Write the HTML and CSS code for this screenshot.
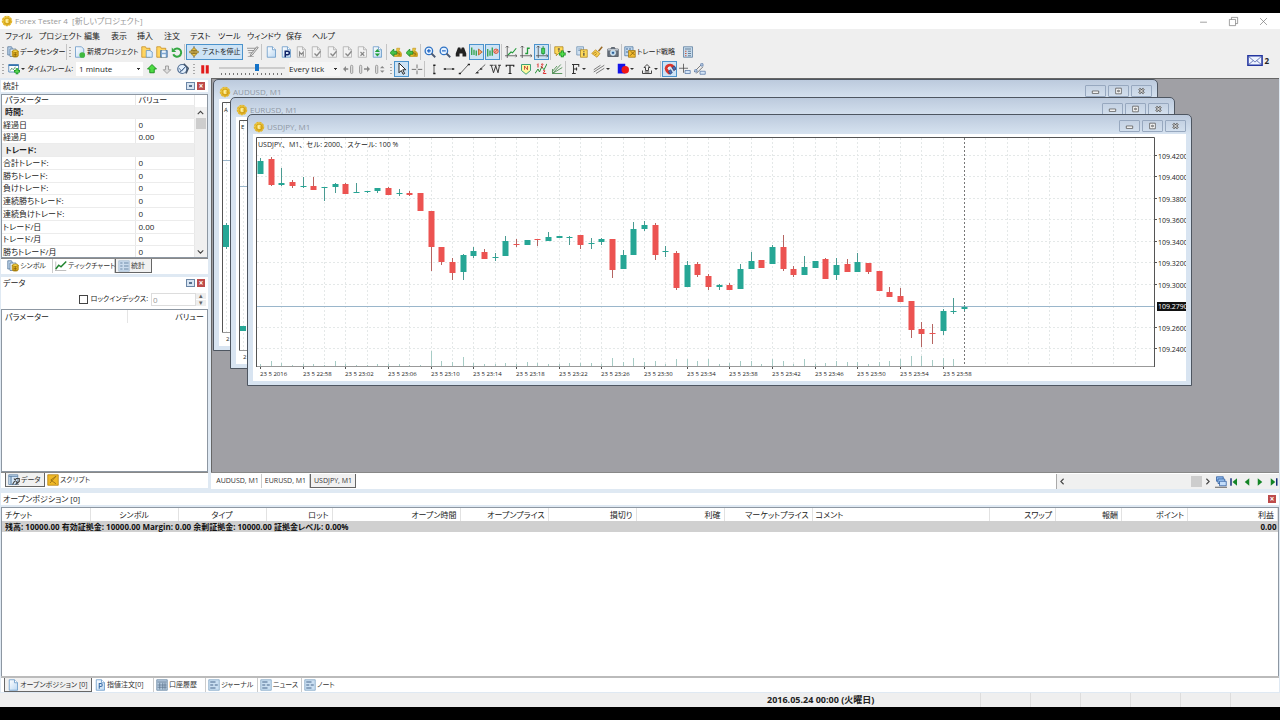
FILE: index.html
```html
<!DOCTYPE html>
<html lang="ja">
<head>
<meta charset="utf-8">
<title>Forex Tester 4</title>
<link rel="stylesheet" href="styles.css">
</head>
<body>
<svg class="sprite" aria-hidden="true">
  <defs>
    <linearGradient id="gold" x1="0" y1="0" x2="1" y2="1"><stop offset="0" stop-color="#ffe45a"/><stop offset="1" stop-color="#d29a08"/></linearGradient>
    <linearGradient id="paper" x1="0" y1="0" x2="1" y2="1"><stop offset="0" stop-color="#fff"/><stop offset="1" stop-color="#bcd8f2"/></linearGradient>
  </defs>
  <symbol id="coin" viewBox="0 0 16 16"><circle cx="8" cy="8" r="6" fill="url(#gold)" stroke="#e3b62c" stroke-width="2" stroke-dasharray="3 1"/><circle cx="8" cy="8" r="4" fill="none" stroke="#c99a18"/><path d="M10 6.500H7V9.500h3M8 5.500v5" fill="none" stroke="#fff6b8" stroke-width="1.200"/></symbol>
  <symbol id="datacenter" viewBox="0 0 16 16"><path d="M1 1h5l1 2v9H1z" fill="#b9d1e8" stroke="#55789c"/><path d="M4 4h8v10H4z" fill="#e6f0fa" stroke="#55789c"/><ellipse cx="11" cy="7" rx="4" ry="1.600" fill="#ffe25a" stroke="#b38300"/><path d="M7 7v6c0 2.400 8 2.400 8 0V7c0 2-8 2-8 0z" fill="#f2bd2a" stroke="#a67c00"/><path d="M8 10.500c2 1 4 1 6 0M8 13c2 1 4 1 6 0M11 8.500v5" stroke="#7a5a00" fill="none"/></symbol>
  <symbol id="newdoc" viewBox="0 0 16 16"><path d="M2 1h8l3 3v11H2z" fill="url(#paper)" stroke="#5f93c4"/><circle cx="11" cy="12" r="3.800" fill="#3fb83f"/></symbol>
  <symbol id="folder" viewBox="0 0 16 16"><path d="M1 3V1h5l1 2h5v12H1z" fill="#ffd560" stroke="#c48a1c"/><path d="M7 6h5l3 2v7H7z" fill="#d9ebfb" stroke="#5f93c4"/></symbol>
  <symbol id="foldersave" viewBox="0 0 16 16"><path d="M1 3V1h5l1 2h6v12H1z" fill="#ffd560" stroke="#c48a1c"/><path d="M6 6h9v9H6z" fill="#7fa8d2" stroke="#426f9e"/><path d="M8 6h5v3H8zM8 11h5v4H8z" fill="#eef5fc"/></symbol>
  <symbol id="refresh" viewBox="0 0 16 16"><path d="M4 5a5.500 5.500 0 1 1-1 6" fill="none" stroke="#35a843" stroke-width="2.600"/><path d="M1 2v6h6z" fill="#35a843"/></symbol>
  <symbol id="stopper" viewBox="0 0 16 16"><path d="M8 0v16" stroke="#555"/><path d="M8 2l4 4H4zM8 14l4-4H4z" fill="#eac24a" stroke="#85670a"/><path d="M2 7h12v2H2z" fill="#d6a92b" stroke="#7c6220" stroke-width=".6"/></symbol>
  <symbol id="pencil" viewBox="0 0 16 16"><path d="M0 3h13M1 6h9M2 9h6" stroke="#999" stroke-width="1.500"/><path d="M15 2L7 12l-3 2 1-3 8-10z" fill="#e0e0e0" stroke="#777"/><path d="M1 14h8" stroke="#999"/></symbol>
  <symbol id="doc" viewBox="0 0 16 16"><path d="M3 1h7l4 4v10H3z" fill="url(#paper)" stroke="#5f93c4"/><path d="M10 1v4h4" fill="#fff" stroke="#5f93c4"/></symbol>
  <symbol id="graydoc" viewBox="0 0 16 16"><path d="M3 1h7l4 4v10H3z" fill="#f3f3f3" stroke="#aaa"/><path d="M10 1v4h4" fill="none" stroke="#aaa"/></symbol>
  <symbol id="docp" viewBox="0 0 16 16"><use href="#doc"/><path d="M7 15V7h3q2.500 0 2.500 2.300T10 11.600H7" fill="none" stroke="#102468" stroke-width="2"/></symbol>
  <symbol id="docpsmall" viewBox="0 0 16 16"><use href="#doc"/><path d="M7 13V6h2q2 0 2 2T9 10H7" fill="none" stroke="#3b6ea8" stroke-width="1.400"/></symbol>
  <symbol id="docm" viewBox="0 0 16 16"><use href="#graydoc"/><path d="M6 14V8l2.500 3L11 8v6" fill="none" stroke="#888" stroke-width="1.500"/></symbol>
  <symbol id="doccheck" viewBox="0 0 16 16"><use href="#graydoc"/><path d="M6 10l3 3 5-6" fill="none" stroke="#888" stroke-width="1.800"/></symbol>
  <symbol id="docx" viewBox="0 0 16 16"><use href="#graydoc"/><path d="M6 8l5 5M11 8l-5 5" fill="none" stroke="#888" stroke-width="1.500"/></symbol>
  <symbol id="docsort" viewBox="0 0 16 16"><use href="#doc"/><path d="M8.500 4l3.500 4H5zM8.500 14l3.500-4H5z" fill="#20a03a"/></symbol>
  <symbol id="money" viewBox="0 0 16 16"><path d="M9 3h4l-1 3q5 3 3 8H6q-2-5 3-8z" fill="url(#gold)" stroke="#c29a28"/><path d="M13 8h-3v2h3v2h-3" fill="none" stroke="#8a6a10"/><path d="M0 9l5-5v3h4v4H5v3z" fill="#45c24b" stroke="#17831f"/></symbol>
  <symbol id="zoomin" viewBox="0 0 16 16"><circle cx="6.500" cy="6.500" r="5" fill="#e4f1ff" stroke="#2e72c4" stroke-width="1.700"/><path d="M10 10l5 5" stroke="#4a5a74" stroke-width="2.400"/><path d="M4 6.500h5M6.500 4v5" stroke="#175fc1" stroke-width="1.500"/></symbol>
  <symbol id="zoomout" viewBox="0 0 16 16"><circle cx="6.500" cy="6.500" r="5" fill="#e4f1ff" stroke="#2e72c4" stroke-width="1.700"/><path d="M10 10l5 5" stroke="#4a5a74" stroke-width="2.400"/><path d="M4 6.500h5" stroke="#175fc1" stroke-width="1.500"/></symbol>
  <symbol id="binoculars" viewBox="0 0 16 16"><path d="M4 2h3l1 3 1-3h3l3 8v4h-5v-4H6v4H1v-4z" fill="#222"/></symbol>
  <symbol id="barsshift" viewBox="0 0 16 16"><path d="M1 2v10M4 5v7M7 6v7" stroke="#239b3a" stroke-width="1.600"/><path d="M10 4l5 4-5 4z" fill="#f6a868" stroke="#b0541d"/></symbol>
  <symbol id="barsstop" viewBox="0 0 16 16"><path d="M1 4v10M4 6v7M7 2v11" stroke="#239b3a" stroke-width="1.600"/><circle cx="12" cy="7" r="3" fill="#f9b5a0" stroke="#cc3b20"/><path d="M10 9l4-4" stroke="#cc3b20"/></symbol>
  <symbol id="linechart" viewBox="0 0 16 16"><path d="M3 0v16M0 13h16M1 2l2-2 2 2M14 11l2 2-2 2" fill="none" stroke="#444"/><path d="M4 12l4-4 2 1 5-6" fill="none" stroke="#239b3a" stroke-width="1.500"/></symbol>
  <symbol id="barchart" viewBox="0 0 16 16"><path d="M3 0v16M0 13h16M1 2l2-2 2 2M14 11l2 2-2 2" fill="none" stroke="#444"/><path d="M7 10h3V3h3M10 2v9" fill="none" stroke="#239b3a" stroke-width="1.700"/></symbol>
  <symbol id="candlechart" viewBox="0 0 16 16"><path d="M3 0v16M0 13h16M1 2l2-2 2 2M14 11l2 2-2 2" fill="none" stroke="#444"/><path d="M9.500 0v12" stroke="#178a2d"/><path d="M7.500 3h4v7h-4z" fill="#46d25e" stroke="#178a2d"/></symbol>
  <symbol id="noteplus" viewBox="0 0 16 16"><path d="M1 1h11v9H6l-3 3v-3H1z" fill="#ffda58" stroke="#a9801f"/><path d="M6.500 3v5M5 4h3" stroke="#444"/><path d="M11 6v9M6.500 10.500h9" stroke="#138a1f" stroke-width="4"/><path d="M11 7v7M7.500 10.500h7" stroke="#55df4d" stroke-width="2"/></symbol>
  <symbol id="notes" viewBox="0 0 16 16"><path d="M1 1h9v11H1z" fill="#cfe0f0" stroke="#6d8fb0"/><path d="M3 4h5M3 6h5" stroke="#6d8fb0"/><path d="M6 5h9v10H6z" fill="#ffda58" stroke="#a9801f"/><path d="M10.500 7v1M10.500 9v4" stroke="#444" stroke-width="1.600"/></symbol>
  <symbol id="broom" viewBox="0 0 16 16"><path d="M15 1l-5 6" stroke="#9a6a25" stroke-width="2"/><path d="M6 5l6 5-4 5-7-5z" fill="#f7cf52" stroke="#bb8b20"/><path d="M3 10l4-2M5 12l3-2" stroke="#a97815"/></symbol>
  <symbol id="camera" viewBox="0 0 16 16"><path d="M1 4h4l1-2h4l1 2h4v10H1z" fill="#68727e" stroke="#48515b"/><path d="M1 4h14v2H1z" fill="#bac2cb"/><circle cx="8" cy="9" r="3.500" fill="#a9d2ee" stroke="#eee"/><circle cx="8" cy="9" r="1.500" fill="#315c91"/></symbol>
  <symbol id="strategy" viewBox="0 0 16 16"><path d="M1 1h11v12H1z" fill="#c3d8ee" stroke="#4f789f"/><path d="M3 3h2v2H3zM7 3h2v2H7zM3 7h2v2H3z" fill="#537ba1"/><path d="M6 6h9v9H6z" fill="#f4bc32" stroke="#9a7414"/><path d="M8 13l6-6M9 7l5 5" stroke="#755505"/></symbol>
  <symbol id="listbox" viewBox="0 0 16 16"><path d="M2 1h12v14H2z" fill="#c8dced" stroke="#58799b"/><path d="M4 4h8M8 7h4M8 10h4M8 13h4" stroke="#46617c"/><path d="M4 7h2M4 10h2M4 13h2" stroke="#c8583e" stroke-width="1.500"/></symbol>
  <symbol id="chartplus" viewBox="0 0 16 16"><path d="M1 2h13v10H1z" fill="#fff" stroke="#3573ad"/><path d="M1 3h13" stroke="#3573ad" stroke-width="2"/><path d="M3 10l2-3 2 2 3-4" fill="none" stroke="#2d6d4a"/><path d="M12 7v8M8 11h8" stroke="#149225" stroke-width="3.500"/><path d="M12 8v6M9 11h6" stroke="#65e157" stroke-width="1.500"/></symbol>
  <symbol id="up" viewBox="0 0 16 16"><path d="M8 2l6 6h-3v5H5V8H2z" fill="#4ddb43" stroke="#168b18" stroke-width="1.200"/></symbol>
  <symbol id="down" viewBox="0 0 16 16"><path d="M8 14L3 9h3V4h4v5h3z" fill="#ddd" stroke="#999" stroke-width="1.200"/></symbol>
  <symbol id="clock" viewBox="0 0 16 16"><circle cx="7" cy="8" r="6" fill="#e4f0fc" stroke="#526f94" stroke-width="1.600"/><path d="M9 1l6 6-3 7" fill="none" stroke="#45576e" stroke-width="2"/><path d="M3 7l3 4 6-7M4 12l7-7" fill="none" stroke="#526f94" stroke-width="1.300"/></symbol>
  <symbol id="pause" viewBox="0 0 16 16"><path d="M3 3h4v11H3zM9 3h4v11H9z" fill="#e21a1a"/></symbol>
  <symbol id="stepback" viewBox="0 0 16 16"><path d="M0 8l4-4v3h3v2H4v3z" fill="#888"/><rect x="10" y="3" width="3" height="11" rx="1.500" fill="#ddd" stroke="#888"/></symbol>
  <symbol id="stepfwd" viewBox="0 0 16 16"><rect x="2" y="3" width="3" height="11" rx="1.500" fill="#ddd" stroke="#888"/><path d="M16 8l-4-4v3H8v2h4v3z" fill="#888"/></symbol>
  <symbol id="stepbar" viewBox="0 0 16 16"><rect x="2" y="3" width="3" height="11" rx="1.500" fill="#ddd" stroke="#888"/><path d="M8 7l3-3 3 3zM8 10l3 3 3-3z" fill="#888"/></symbol>
  <symbol id="pointer" viewBox="0 0 16 16"><path d="M4 0v13l3-3 2.500 5 2-1-2.500-5h4z" fill="#fff" stroke="#111" stroke-width="1.200"/></symbol>
  <symbol id="cross" viewBox="0 0 16 16"><path d="M8 2v5M8 10v5M1 8.500h6M9 8.500h6" stroke="#666" stroke-width="1.200"/></symbol>
  <symbol id="vline" viewBox="0 0 16 16"><path d="M8 3v11" stroke="#333"/><path d="M7 2h3v2H7zM7 13h3v2H7z" fill="#222"/></symbol>
  <symbol id="hline" viewBox="0 0 16 16"><path d="M2 8h12" stroke="#333"/><path d="M1 7h3v2H1zM12 7h3v2h-3z" fill="#222"/></symbol>
  <symbol id="dline" viewBox="0 0 16 16"><path d="M3 14L14 2" stroke="#333"/><path d="M1 13h3v2H1zM13 1h3v2h-3z" fill="#222"/></symbol>
  <symbol id="ray" viewBox="0 0 16 16"><path d="M2 14L15 2" stroke="#333"/><path d="M3 12h3v2H3zM8 7h3v2H8z" fill="#333"/></symbol>
  <symbol id="wave" viewBox="0 0 16 16"><path d="M1 3h5M7 3h3M12 3h4M3 3l3 10 3-9 3 9 2-10" fill="none" stroke="#333" stroke-width="1.300"/></symbol>
  <symbol id="text" viewBox="0 0 16 16"><path d="M3 5V3h10v2M8 3v11M6 14h4" fill="none" stroke="#222" stroke-width="1.600"/></symbol>
  <symbol id="flag" viewBox="0 0 16 16"><path d="M2 2h12v8l-6 5-6-5z" fill="#fff8a0" stroke="#3b9f73" stroke-width="1.300"/><path d="M6 9V4l4 5V4" fill="none" stroke="#bf2924"/></symbol>
  <symbol id="elliott" viewBox="0 0 16 16"><path d="M0 14l4-6 2 4 3-7 3 4 4-8" fill="none" stroke="#238d32" stroke-width="1.300"/><path d="M3 2l1-1v5M8 2q4-2 2 1l-2 2q4 0 1 2M11 10q4 0 1 2l-1 2h4" fill="none" stroke="#db2b2b" stroke-width="1.300"/></symbol>
  <symbol id="fan" viewBox="0 0 16 16"><path d="M2 8v6h13M2 14L13 2M2 14L15 6M2 11l6-7" fill="none" stroke="#4f8f54" stroke-width="1.200"/></symbol>
  <symbol id="fibo" viewBox="0 0 16 16"><path d="M4 2h9v3M6 2v12M4 14h5M6 8h5M10 6v4" fill="none" stroke="#333" stroke-width="1.400"/></symbol>
  <symbol id="channel" viewBox="0 0 16 16"><path d="M1 9l9-6M1 12l14-9M4 14l11-7" stroke="#555"/></symbol>
  <symbol id="shapes" viewBox="0 0 16 16"><path d="M1 1h10v13H1z" fill="#1414e8"/><circle cx="11" cy="9" r="5" fill="#f01717"/></symbol>
  <symbol id="bigarrow" viewBox="0 0 16 16"><path d="M8 2l4 4h-2v4H6V6H4zM2 10v4h12v-4M5 12h6" fill="none" stroke="#333" stroke-width="1.200"/></symbol>
  <symbol id="magnet" viewBox="0 0 16 16"><path d="M3 8a5 5 0 0 1 9-3l3 4" fill="none" stroke="#d9352c" stroke-width="4"/><path d="M3 7q0 4 5 7" fill="none" stroke="#d9352c" stroke-width="4"/><path d="M11 6l3-2 2 4-3 2zM6 11l3-2 2 4-3 2z" fill="#4670bd" stroke="#294476"/><path d="M5 8q0-3 4-3" stroke="#fff" fill="none"/></symbol>
  <symbol id="crossnote" viewBox="0 0 16 16"><path d="M6 1v12M0 7h12" stroke="#444"/><path d="M8 10h7v4H8z" fill="#d5e5f6" stroke="#5677a7"/></symbol>
  <symbol id="linenote" viewBox="0 0 16 16"><path d="M0 12L11 1M3 14l9-9" stroke="#555"/><path d="M1 9h3v3H1zM9 1h3v3H9zM8 11h7v4H8z" fill="#d5e5f6" stroke="#5677a7"/></symbol>
  <symbol id="tick" viewBox="0 0 16 16"><path d="M1 2v12M0 14h15" stroke="#aaa"/><path d="M1 12l4-5 3 2 7-7" fill="none" stroke="#21852f" stroke-width="2"/></symbol>
  <symbol id="stats" viewBox="0 0 16 16"><path d="M1 1h14v14H1z" fill="#cadbed" stroke="#a3bbd3"/><path d="M3 4h3M3 8h3M3 12h3M8 4h6M8 8h6M8 12h6" stroke="#6c89a8" stroke-width="1.500"/></symbol>
  <symbol id="data" viewBox="0 0 16 16"><path d="M1 1h12v13H1z" fill="#d6e7f7" stroke="#5d81a6"/><path d="M1 3h12M4 3v11" stroke="#5d81a6" stroke-width="1.500"/><path d="M6 14l5-8h4v4l-5 4M8 6l6 8" stroke="#444" fill="none" stroke-width="1.500"/></symbol>
  <symbol id="script" viewBox="0 0 16 16"><path d="M1 1h14v14H1z" fill="#f0b928" stroke="#b17b0a"/><path d="M12 3L5 8l7 5M4 12l8-9" fill="none" stroke="#8c6412"/></symbol>
  <symbol id="calendar" viewBox="0 0 16 16"><path d="M1 1h14v14H1z" fill="#b7cce0" stroke="#64839f"/><path d="M2 4h12M5 5v9M9 5v9M12 5v9M2 8h12M2 11h12" stroke="#5c748d"/></symbol>
  <symbol id="journal" viewBox="0 0 16 16"><path d="M1 1h14v14H1z" fill="#cadff2" stroke="#7da1c2"/><path d="M3 4h7M3 8h4M9 8h4M3 12h7" stroke="#49698b" stroke-width="1.500"/></symbol>
  <symbol id="cascade" viewBox="0 0 16 16"><path d="M2 1h9v6H2z" fill="#8bb6ec" stroke="#29589b"/><path d="M4 4h9v6H4z" fill="#a7ccf6" stroke="#29589b"/><path d="M6 7h9v6H6z" fill="#c3ddfa" stroke="#29589b"/><path d="M0 15h16" stroke="#333"/></symbol>
  <symbol id="first" viewBox="0 0 16 16"><path d="M4 3v10" stroke="#172f7a" stroke-width="2"/><path d="M12 3v10L6 8z" fill="#148526"/></symbol>
  <symbol id="prev" viewBox="0 0 16 16"><path d="M11 3v10L5 8z" fill="#148526"/></symbol>
  <symbol id="next" viewBox="0 0 16 16"><path d="M5 3v10l6-5z" fill="#148526"/></symbol>
  <symbol id="last" viewBox="0 0 16 16"><path d="M13 3v10" stroke="#172f7a" stroke-width="2"/><path d="M5 3v10l6-5z" fill="#148526"/></symbol>
  <symbol id="mail" viewBox="0 0 20 14"><path d="M1 1h18v12H1z" fill="#eef4ff" stroke="#2436a0" stroke-width="2"/><path d="M2 2l8 7 8-7M2 12l6-5M18 12l-6-5" fill="none" stroke="#5061a8"/></symbol>
  <symbol id="min" viewBox="0 0 10 10"><path d="M1 5h8v3H1z" fill="#fff" stroke="#555"/></symbol>
  <symbol id="max" viewBox="0 0 10 10"><path d="M1.500 1.500h7v7h-7z" fill="#fff" stroke="#555"/><path d="M4 4h2v2H4z" fill="#fff" stroke="#555"/></symbol>
  <symbol id="close" viewBox="0 0 10 10"><path d="M2 2l6 6M8 2L2 8" stroke="#555" stroke-width="3"/><path d="M2 2l6 6M8 2L2 8" stroke="#fff" stroke-width="1.200"/></symbol>
  <symbol id="syswin" viewBox="0 0 16 16"><path d="M2 5h9v9H2zM5 5V2h9v9h-3" fill="none" stroke="#777"/></symbol>
  <symbol id="sysmin" viewBox="0 0 16 16"><path d="M3 9h10" stroke="#777"/></symbol>
  <symbol id="sysclose" viewBox="0 0 16 16"><path d="M3 3l10 10M13 3L3 13" stroke="#777"/></symbol>
</svg>

<div class="app">
  <header class="titlebar">
    <svg class="icon"><use href="#coin"/></svg><h1 class="apptitle">Forex Tester 4&nbsp; [新しいプロジェクト]</h1>
    <div class="syscontrols">
      <button class="sys" aria-label="最小化"><svg class="icon"><use href="#sysmin"/></svg></button>
      <button class="sys" aria-label="元に戻す"><svg class="icon"><use href="#syswin"/></svg></button>
      <button class="sys" aria-label="閉じる"><svg class="icon"><use href="#sysclose"/></svg></button>
    </div>
  </header>

  <nav class="menu">
    <button class="w34">ファイル</button><button class="w45">プロジェクト</button><button class="w27">編集</button><button class="w26">表示</button><button class="w27">挿入</button><button class="w26">注文</button><button class="w28">テスト</button><button class="w29">ツール</button><button class="w39">ウィンドウ</button><button class="w26">保存</button><button class="w34">ヘルプ</button>
  </nav>

  <div class="toolarea">
    <div class="toolbars">
      <div class="toolbar">
        <div class="group grip w66"><button class="tool wide"><svg class="icon"><use href="#datacenter"/></svg>データセンター</button></div>
        <div class="group sep grip w118"><button class="tool wide"><svg class="icon"><use href="#newdoc"/></svg>新規プロジェクト</button><button class="tool" aria-label="開く"><svg class="icon"><use href="#folder"/></svg></button><button class="tool" aria-label="保存"><svg class="icon"><use href="#foldersave"/></svg></button><button class="tool" aria-label="更新"><svg class="icon"><use href="#refresh"/></svg></button></div>
        <div class="group sep w77"><button class="tool wide on"><svg class="icon"><use href="#stopper"/></svg>テストを停止</button><button class="tool" aria-label="編集"><svg class="icon"><use href="#pencil"/></svg></button></div>
        <div class="group sep w125"><button class="tool" aria-label="注文"><svg class="icon"><use href="#doc"/></svg></button><button class="tool" aria-label="指値注文"><svg class="icon"><use href="#docp"/></svg></button><button class="tool" aria-label="変更"><svg class="icon"><use href="#docm"/></svg></button><button class="tool" aria-label="確認"><svg class="icon"><use href="#doccheck"/></svg></button><button class="tool" aria-label="部分決済"><svg class="icon"><use href="#doccheck"/></svg></button><button class="tool" aria-label="決済"><svg class="icon"><use href="#doccheck"/></svg></button><button class="tool" aria-label="削除"><svg class="icon"><use href="#docx"/></svg></button><button class="tool" aria-label="並べ替え"><svg class="icon"><use href="#docsort"/></svg></button></div>
        <div class="group sep w34"><button class="tool" aria-label="入金"><svg class="icon"><use href="#money"/></svg></button><button class="tool" aria-label="出金"><svg class="icon"><use href="#money"/></svg></button></div>
        <div class="group sep w81"><button class="tool" aria-label="拡大"><svg class="icon"><use href="#zoomin"/></svg></button><button class="tool" aria-label="縮小"><svg class="icon"><use href="#zoomout"/></svg></button><button class="tool" aria-label="検索"><svg class="icon"><use href="#binoculars"/></svg></button><button class="tool on" aria-label="シフト"><svg class="icon"><use href="#barsshift"/></svg></button><button class="tool on" aria-label="自動スクロール"><svg class="icon"><use href="#barsstop"/></svg></button></div>
        <div class="group sep w49"><button class="tool" aria-label="ライン"><svg class="icon"><use href="#linechart"/></svg></button><button class="tool" aria-label="バー"><svg class="icon"><use href="#barchart"/></svg></button><button class="tool on" aria-label="ローソク足"><svg class="icon"><use href="#candlechart"/></svg></button></div>
        <div class="group sep w23"><button class="tool drop" aria-label="追加"><svg class="icon"><use href="#noteplus"/></svg></button></div>
        <div class="group w48"><button class="tool" aria-label="メモ"><svg class="icon"><use href="#notes"/></svg></button><button class="tool" aria-label="消去"><svg class="icon"><use href="#broom"/></svg></button><button class="tool" aria-label="撮影"><svg class="icon"><use href="#camera"/></svg></button></div>
        <div class="group sep w75"><button class="tool wide"><svg class="icon"><use href="#strategy"/></svg>トレード戦略</button><button class="tool" aria-label="リスト"><svg class="icon"><use href="#listbox"/></svg></button></div>
      </div>
      <div class="toolbar">
        <div class="group grip w76"><button class="tool drop" aria-label="新規チャート"><svg class="icon"><use href="#chartplus"/></svg></button><label class="small" for="frame">タイムフレーム:</label></div>
        <select id="frame" class="combo framebox"><option>1 minute</option></select>
        <div class="group w48"><button class="tool" aria-label="上へ"><svg class="icon"><use href="#up"/></svg></button><button class="tool" aria-label="下へ"><svg class="icon"><use href="#down"/></svg></button><button class="tool" aria-label="時刻"><svg class="icon"><use href="#clock"/></svg></button></div>
        <div class="group grip w26"><button class="tool" aria-label="一時停止"><svg class="icon"><use href="#pause"/></svg></button></div>
        <input class="speed" type="range" min="0" max="100" value="58" aria-label="速度">
        <select class="combo tickbox" aria-label="ティック"><option>Every tick</option></select>
        <div class="group w48"><button class="tool" aria-label="戻る"><svg class="icon"><use href="#stepback"/></svg></button><button class="tool" aria-label="進む"><svg class="icon"><use href="#stepfwd"/></svg></button><button class="tool" aria-label="ステップ"><svg class="icon"><use href="#stepbar"/></svg></button></div>
        <div class="group grip w36"><button class="tool on" aria-label="選択"><svg class="icon"><use href="#pointer"/></svg></button><button class="tool" aria-label="十字"><svg class="icon"><use href="#cross"/></svg></button></div>
        <div class="group sep w141"><button class="tool" aria-label="垂直線"><svg class="icon"><use href="#vline"/></svg></button><button class="tool" aria-label="水平線"><svg class="icon"><use href="#hline"/></svg></button><button class="tool" aria-label="線分"><svg class="icon"><use href="#dline"/></svg></button><button class="tool" aria-label="レイ"><svg class="icon"><use href="#ray"/></svg></button><button class="tool" aria-label="波"><svg class="icon"><use href="#wave"/></svg></button><button class="tool" aria-label="テキスト"><svg class="icon"><use href="#text"/></svg></button><button class="tool" aria-label="ニュース"><svg class="icon"><use href="#flag"/></svg></button><button class="tool" aria-label="エリオット"><svg class="icon"><use href="#elliott"/></svg></button><button class="tool" aria-label="ファン"><svg class="icon"><use href="#fan"/></svg></button></div>
        <div class="group sep w95"><button class="tool drop" aria-label="フィボナッチ"><svg class="icon"><use href="#fibo"/></svg></button><button class="tool drop" aria-label="チャネル"><svg class="icon"><use href="#channel"/></svg></button><button class="tool drop" aria-label="図形"><svg class="icon"><use href="#shapes"/></svg></button><button class="tool drop" aria-label="矢印"><svg class="icon"><use href="#bigarrow"/></svg></button></div>
        <div class="group sep w48"><button class="tool on" aria-label="マグネット"><svg class="icon"><use href="#magnet"/></svg></button><button class="tool" aria-label="座標"><svg class="icon"><use href="#crossnote"/></svg></button><button class="tool" aria-label="距離"><svg class="icon"><use href="#linenote"/></svg></button></div>
      </div>
    </div>
    <button class="mail"><svg class="mailicon"><use href="#mail"/></svg>2</button>
  </div>

  <main class="work">
    <aside class="dock">
      <section class="panel">
        <header class="panelhead"><h2>統計</h2><button class="pin" aria-label="ピン"></button><button class="x" aria-label="閉じる">×</button></header>
        <div class="statbox">
          <table class="stats">
            <thead><tr><th class="namecol">パラメーター</th><th>バリュー</th></tr></thead>
            <tbody>
              <tr class="cat"><td colspan="2">時間:</td></tr>
              <tr><td>経過日</td><td>0</td></tr>
              <tr><td>経過月</td><td>0.00</td></tr>
              <tr class="cat"><td colspan="2">トレード:</td></tr>
              <tr><td>合計トレード:</td><td>0</td></tr>
              <tr><td>勝ちトレード:</td><td>0</td></tr>
              <tr><td>負けトレード:</td><td>0</td></tr>
              <tr><td>連続勝ちトレード:</td><td>0</td></tr>
              <tr><td>連続負けトレード:</td><td>0</td></tr>
              <tr><td>トレード/日</td><td>0.00</td></tr>
              <tr><td>トレード/月</td><td>0</td></tr>
              <tr><td>勝ちトレード/月</td><td>0</td></tr>
            </tbody>
          </table>
          <div class="vscroll"><svg viewBox="0 0 10 10"><path d="M2.500 6.500L5 4l2.500 2.500" /></svg><div class="vthumb"></div><svg class="vend" viewBox="0 0 10 10"><path d="M2.500 4L5 6.500 7.500 4" /></svg></div>
        </div>
        <div class="tabs docktabs"><button class="tab w48"><svg class="icon"><use href="#datacenter"/></svg>シンボル</button><button class="tab w62"><svg class="icon"><use href="#tick"/></svg>ティックチャート</button><button class="tab active w37"><svg class="icon"><use href="#stats"/></svg>統計</button></div>
      </section>
      <section class="panel grow">
        <header class="panelhead"><h2>データ</h2><button class="pin" aria-label="ピン"></button><button class="x" aria-label="閉じる">×</button></header>
        <div class="lockrow"><label class="lock"><input type="checkbox">ロックインデックス:</label><input class="index" type="text" value="0" disabled aria-label="インデックス"><div class="spin"><button aria-label="増やす">▴</button><button aria-label="減らす">▾</button></div></div>
        <div class="databox"><table class="datatable"><thead><tr><th>パラメーター</th><th class="right">バリュー</th></tr></thead></table></div>
        <div class="tabs docktabs"><button class="tab active w40"><svg class="icon"><use href="#data"/></svg>データ</button><button class="tab last w50"><svg class="icon"><use href="#script"/></svg>スクリプト</button></div>
      </section>
    </aside>

    <section class="mdi">
      <div class="desktop">
        <article class="win win1"><header class="wintitle"><svg class="icon"><use href="#coin"/></svg><h2>AUDUSD, M1</h2><div class="winctl"><button aria-label="最小化"><svg><use href="#min"/></svg></button><button aria-label="最大化"><svg><use href="#max"/></svg></button><button aria-label="閉じる"><svg><use href="#close"/></svg></button></div></header>
          <div class="winbody"><svg class="chart" viewBox="0 0 934 247"><path class="frame" d="M3.500 233V3.500H901"/><path class="grid" d="M7.500 4V233"/><path class="price" d="M4 61.500H40"/><path class="upwick" d="M7.500 124v26"/><path class="upbody" d="M4 126h6v22H4z"/><path class="baseline" d="M3 233.500H40"/><text x="5" y="13">A</text><text x="7" y="242">2</text></svg></div></article>
        <article class="win win2"><header class="wintitle"><svg class="icon"><use href="#coin"/></svg><h2>EURUSD, M1</h2><div class="winctl"><button aria-label="最小化"><svg><use href="#min"/></svg></button><button aria-label="最大化"><svg><use href="#max"/></svg></button><button aria-label="閉じる"><svg><use href="#close"/></svg></button></div></header>
          <div class="winbody"><svg class="chart" viewBox="0 0 934 247"><path class="frame" d="M3.500 233V3.500H901"/><path class="grid" d="M7.500 4V233"/><path class="price" d="M4 69.500H40"/><path class="upbody" d="M4 209h6v5H4z"/><path class="baseline" d="M3 233.500H40"/><text x="5" y="12">E</text><text x="7" y="242">2</text></svg></div></article>
        <article class="win win3"><header class="wintitle"><svg class="icon"><use href="#coin"/></svg><h2>USDJPY, M1</h2><div class="winctl"><button aria-label="最小化"><svg><use href="#min"/></svg></button><button aria-label="最大化"><svg><use href="#max"/></svg></button><button aria-label="閉じる"><svg><use href="#close"/></svg></button></div></header>
          <div class="winbody"><svg class="chart" id="usdjpy" viewBox="253 134 934 247" role="img" aria-label="USDJPY, M1"></svg></div></article>
      </div>
      <div class="mdifoot">
        <div class="tabs mditabs"><button class="tab w48">AUDUSD, M1</button><button class="tab w48">EURUSD, M1</button><button class="tab active w46">USDJPY, M1</button></div>
        <div class="hscroll"><svg viewBox="0 0 10 10"><path d="M6 2.500L3.500 5 6 7.500"/></svg><div class="hthumb"></div><svg viewBox="0 0 10 10"><path d="M4 2.500L6.500 5 4 7.500"/></svg></div>
        <div class="navbtns"><button aria-label="重ねて表示"><svg class="icon"><use href="#cascade"/></svg></button><button aria-label="最初"><svg class="icon"><use href="#first"/></svg></button><button aria-label="前"><svg class="icon"><use href="#prev"/></svg></button><button aria-label="次"><svg class="icon"><use href="#next"/></svg></button><button aria-label="最後"><svg class="icon"><use href="#last"/></svg></button></div>
      </div>
    </section>
  </main>

  <section class="orders">
    <header class="panelhead"><h2>オープンポジション [0]</h2><button class="x" aria-label="閉じる">×</button></header>
    <div class="orderbox">
      <table class="ordertable">
        <colgroup><col class="c88"><col class="c88"><col class="c88"><col class="c66"><col class="c128"><col class="c88"><col class="c88"><col class="c88"><col class="c88"><col><col class="c66"><col class="c66"><col class="c66"><col class="c90"></colgroup>
        <thead><tr><th>チケット</th><th class="center">シンボル</th><th class="center">タイプ</th><th class="right">ロット</th><th class="right">オープン時間</th><th class="right">オープンプライス</th><th class="right">損切り</th><th class="right">利確</th><th class="right">マーケットプライス</th><th>コメント</th><th class="right">スワップ</th><th class="right">報酬</th><th class="right">ポイント</th><th class="right">利益</th></tr></thead>
        <tbody><tr><td colspan="13">残高: 10000.00 有効証拠金: 10000.00 Margin: 0.00 余剰証拠金: 10000.00 証拠金レベル: 0.00%</td><td class="right">0.00</td></tr></tbody>
      </table>
    </div>
    <div class="tabs ordertabs"><button class="tab active w88"><svg class="icon"><use href="#doc"/></svg>オープンポジション [0]</button><button class="tab w62"><svg class="icon"><use href="#docpsmall"/></svg>指値注文[0]</button><button class="tab w52"><svg class="icon"><use href="#calendar"/></svg>口座履歴</button><button class="tab w52"><svg class="icon"><use href="#journal"/></svg>ジャーナル</button><button class="tab w44"><svg class="icon"><use href="#journal"/></svg>ニュース</button><button class="tab last w40"><svg class="icon"><use href="#journal"/></svg>ノート</button></div>
  </section>

  <footer class="status"><span class="cell clockcell">2016.05.24 00:00 (火曜日)</span><span class="cell"></span><span class="cell"></span><span class="cell"></span><span class="cell"></span><span class="cell"></span><span class="cell"></span></footer>
</div>
<script src="chart.js"></script>
</body>
</html>
```
FILE: styles.css
```css
* { box-sizing: border-box; }
body { margin: 0; background: #000; color: #222; font: 8px/10px "Open Sans", "Noto Sans CJK JP", sans-serif; font-feature-settings: "palt"; }
button, input, select, th { font: inherit; color: inherit; font-feature-settings: inherit; }
button { border: 0; padding: 0; background: none; white-space: nowrap; }
h1, h2 { margin: 0; font: inherit; white-space: nowrap; }
.sprite { position: absolute; width: 0; height: 0; }
.icon { width: 12px; height: 12px; flex: none; display: block; }

.app { height: 100vh; padding: 13px 0; display: flex; flex-direction: column; overflow: hidden; }
.titlebar { flex: 0 0 16px; background: #fff; display: flex; align-items: center; gap: 2px; padding-left: 1px; color: #999; }
.apptitle { flex: 1; }
.syscontrols { display: flex; gap: 19px; padding-right: 11px; }
.sys .icon { width: 11px; height: 11px; }

.menu { flex: 0 0 14px; background: #efefef; display: flex; padding-left: 5px; }
.menu button { text-align: left; flex: none; }

.toolarea { flex: 0 0 35px; display: flex; background: #efefef; justify-content: space-between; }
.toolbar { height: 17px; display: flex; align-items: center; }
.group { flex: none; height: 16px; display: flex; align-items: center; justify-content: space-between; padding: 0 1px; }
.sep { border-left: 1px solid #c4c4c4; }
.grip { background: repeating-linear-gradient(#aaa 0 1px, transparent 1px 3px) 2px 3px / 2px 11px no-repeat; padding-left: 6px; }
.tool { flex: none; width: 15px; height: 16px; display: flex; align-items: center; justify-content: center; border: 1px solid transparent; }
.tool.wide { width: auto; gap: 1px; font-size: 7px; }
.tool.on { background: #cde3f5; border-color: #4b93cc; }
.tool.wide.on { padding: 0 1px; gap: 2px; }
.tool.drop { width: 20px; gap: 1px; }
.tool.drop::after { content: ""; border: 2px solid transparent; border-top-color: #333; border-bottom: 0; }
.small { font-size: 7px; padding-right: 2px; white-space: nowrap; }
.combo { appearance: none; border: 0; border-radius: 0; height: 14px; padding: 0 3px; background: linear-gradient(#333, #333) right 3px top 6px / 3px 1px no-repeat, linear-gradient(#333, #333) right 4px top 7px / 1px 1px no-repeat #fff; }
.framebox { width: 67px; }
.tickbox { width: 51px; background-color: #f5f5f5; padding-left: 0; }
.speed { appearance: none; width: 66px; height: 14px; margin: 0 4px 0 2px; background: linear-gradient(#ccc, #ccc) 0 5px / 100% 2px no-repeat, repeating-linear-gradient(90deg, #777 0 1px, transparent 1px 4px) 2px 11px / 62px 2px no-repeat; }
.speed::-webkit-slider-thumb { appearance: none; width: 4px; height: 7px; background: #1473c8; margin-bottom: 3px; }
.mail { display: flex; align-items: center; gap: 1px; padding-right: 11px; font-weight: 700; align-self: center; }
.mailicon { width: 16px; height: 11px; }

.work { flex: 1; min-height: 0; display: flex; background: #dfe9f3; gap: 3px; }
.dock { flex: 0 0 208px; display: flex; flex-direction: column; gap: 3px; padding: 2px 0 3px 1px; }
.panel { display: flex; flex-direction: column; }
.grow { flex: 1; min-height: 0; }
.panelhead { flex: 0 0 12px; background: #fff; display: flex; align-items: center; gap: 2px; padding: 0 3px 0 2px; }
.panelhead h2 { flex: 1; }
.x { width: 8px; height: 8px; background: #bd4b4b; color: #fff; font: 700 8px/8px "Open Sans", sans-serif; }
.pin { width: 9px; height: 8px; border: 1px solid #6b86a6; background: linear-gradient(#56708f, #56708f) center / 3px 2px no-repeat #d7e4f2; }
.statbox { flex: 0 0 164px; display: flex; margin-top: 2px; border: 1px solid #8d97a2; background: #fff; overflow: hidden; }
.stats { flex: 1; height: 164px; border-collapse: collapse; table-layout: fixed; }
.stats td, .stats th { padding: 0 1px; text-align: left; border-right: 1px solid #e8e8e8; border-bottom: 1px solid #ececec; line-height: 10px; font-weight: 400; white-space: nowrap; }
.stats .namecol { width: 133px; }
.stats th:first-child { padding-left: 3px; }
.stats td + td, .stats th + th { padding-left: 3px; }
.stats .cat td { background: #eee; font-weight: 700; padding-left: 3px; }
.vscroll { width: 12px; margin-top: 12px; background: #f0f0f0; display: flex; flex-direction: column; }
.vscroll svg, .hscroll svg { width: 11px; height: 11px; fill: none; stroke: #444; flex: none; }
.vthumb { height: 11px; background: #cdcdcd; margin: 0 1px; }
.vscroll .vend { margin-top: auto; }

.tabs { display: flex; background: #fff; }
.tab { flex: none; display: flex; align-items: center; gap: 1px; padding: 0 2px; border-right: 1px solid #ccc; color: #333; }
.tab.active { border: 1px solid #666; border-top: 0; background: #f1f1f1; }
.tab.last { border-right: 0; }
.docktabs { flex: 0 0 16px; border-top: 1px solid #888; padding: 0 0 1px 4px; font-size: 7px; }
.lockrow { flex: 0 0 20px; background: #fff; display: flex; align-items: center; justify-content: flex-end; padding-right: 2px; }
.lock { display: flex; align-items: center; gap: 3px; margin-right: 3px; font-size: 7px; }
.lock input { appearance: none; width: 9px; height: 9px; border: 1px solid #444; background: #fff; margin: 0; }
.index { width: 45px; height: 13px; border: 1px solid #ddd; background: #fff; color: #999; padding: 0 1px; }
.spin { display: flex; flex-direction: column; gap: 1px; width: 10px; }
.spin button { height: 6px; line-height: 6px; font-size: 7px; background: #eee; color: #666; }
.databox { flex: 1; min-height: 0; border: 1px solid #8d97a2; background: #fff; }
.datatable { width: 100%; border-collapse: collapse; }
.datatable th { font-weight: 400; text-align: left; padding: 1px 3px; height: 13px; }
.datatable th:first-child { width: 125px; border-right: 1px solid #e5e5e5; }

.mdi { flex: 1; min-width: 0; display: flex; flex-direction: column; padding: 0 1px 2px 0; }
.desktop { flex: 1; position: relative; background: #a0a0a5; border: solid #666; border-width: 1px 0 0 1px; overflow: hidden; }
.win { position: absolute; width: 945px; height: 272px; padding: 0 5px 4px; border: 1px solid #4e5661; border-radius: 5px 5px 0 0; background: linear-gradient(#bccadd, #d8e4f1 20px); display: flex; flex-direction: column; }
.win1 { left: 1px; top: 0; }
.win2 { left: 18px; top: 18px; }
.win3 { left: 35px; top: 35px; }
.wintitle { flex: 0 0 19px; display: flex; align-items: center; gap: 2px; padding-top: 4px; color: #8f98a4; }
.wintitle h2 { flex: 1; }
.winctl { display: flex; gap: 2px; padding-bottom: 2px; }
.winctl button { width: 21px; height: 12px; border: 1px solid #97a8bf; border-radius: 1px; display: flex; align-items: center; justify-content: center; }
.winctl svg { width: 9px; height: 8px; }
.winbody { flex: 1; min-height: 0; background: #fff; overflow: hidden; }
.chart { width: 934px; height: 247px; display: block; }
.chart text { font: 6px "Open Sans", "Noto Sans CJK JP", sans-serif; fill: #222; }
.chart .heading, .chart .pricetext, .chart .nowtext { font-size: 7px; }
.chart .nowtext { fill: #fff; }
.frame { fill: none; stroke: #555; }
.baseline { fill: none; stroke: #999; }
.grid { fill: none; stroke: #e4e8e8; stroke-dasharray: 2 2; }
.price { fill: none; stroke: #9ab6cb; }
.cursor { fill: none; stroke: #777; stroke-dasharray: 2 2; }
.upbody { fill: #26a695; }
.downbody { fill: #ec5351; }
.upwick { stroke: #4b9b92; }
.downwick { stroke: #b56562; }
.volume { stroke: #a6cbc5; }
.nowbox { fill: #111; }

.mdifoot { flex: 0 0 17px; display: flex; padding-top: 1px; background: #fff; border-top: 1px solid #888; }
.mditabs { flex: 1; padding: 0 0 1px 3px; font-size: 7px; }
.mditabs .tab { justify-content: center; padding: 0; }
.hscroll { flex: 0 0 157px; display: flex; align-items: center; background: #f0f0f0; border-left: 1px solid #aaa; }
.hthumb { width: 11px; height: 11px; background: #cdcdcd; margin-left: auto; }
.navbtns { display: flex; align-items: center; gap: 1px; background: #efefef; padding-left: 2px; }

.orders { flex: 0 0 202px; display: flex; flex-direction: column; background: #dfe9f3; padding: 2px 1px 1px; }
.orders > .panelhead { padding-right: 3px; margin-bottom: 2px; }
.orderbox { flex: 1; min-height: 0; border: 1px solid #8d97a2; border-bottom: 0; background: #fff; }
.ordertable { width: 100%; table-layout: fixed; border-collapse: collapse; }
.ordertable th, .ordertable td { padding: 0 3px; text-align: left; white-space: nowrap; }
.ordertable th { height: 13px; font-weight: 400; border-right: 1px solid #e2e2e2; }
.ordertable td { height: 11px; background: #d0d0d0; font-weight: 700; color: #111; }
.ordertable .center { text-align: center; }
.ordertable .right, .datatable .right { text-align: right; }
.ordertable td.right { padding-right: 1px; }
.c66 { width: 66px; } .c88 { width: 88px; } .c90 { width: 90px; } .c128 { width: 128px; }
.ordertabs { flex: 0 0 16px; border-top: 2px solid #bbb; padding-left: 3px; }
.ordertabs .tab { font-size: 7px; }

.status { flex: 0 0 14px; background: #efefef; display: flex; justify-content: flex-end; }
.cell { width: 50px; border-left: 1px solid #ddd; }
.clockcell { width: 213px; border: 0; font-size: 9px; line-height: 14px; font-weight: 700; color: #222; }

.w23 { width: 23px; } .w26 { width: 26px; } .w27 { width: 27px; } .w28 { width: 28px; } .w29 { width: 29px; }
.w34 { width: 34px; } .w36 { width: 36px; } .w37 { width: 37px; } .w39 { width: 39px; } .w40 { width: 40px; }
.w44 { width: 44px; } .w45 { width: 45px; } .w46 { width: 46px; } .w48 { width: 48px; } .w49 { width: 49px; }
.w50 { width: 50px; } .w52 { width: 52px; } .w62 { width: 62px; } .w66 { width: 66px; } .w75 { width: 75px; }
.w76 { width: 76px; } .w77 { width: 77px; } .w81 { width: 81px; } .w88 { width: 88px; } .w95 { width: 95px; }
.w118 { width: 118px; } .w125 { width: 125px; } .w141 { width: 141px; }
```
FILE: chart.js
```js
// Each candle: direction, body top, body bottom, wick top, wick bottom.
const candles = [
  ['u',161,174,158,174],['d',159,185,157,186],['u',183,185,168,186],['d',182,186,180,188],['u',186,187,177,188],
  ['d',186,190,177,190],['u',187,188,187,201],['u',184,187,183,193],['d',184,194,183,194],['u',192,193,183,193],
  ['u',191,192,191,193],['u',188,191,188,193],['d',188,195,187,195],['u',193,194,189,196],['d',193,195,191,196],
  ['d',193,211,193,211],['d',211,247,211,271],['d',247,262,247,265],['d',262,273,258,280],['u',255,272,254,280],
  ['u',251,256,247,258],['d',252,259,249,259],['u',257,258,253,261],['u',241,256,236,256],['d',244,245,239,247],
  ['u',240,245,240,245],['d',239,240,239,246],['u',237,241,232,241],['u',236,238,236,238],['u',237,238,236,245],
  ['d',235,245,235,249],['u',243,244,238,249],['u',239,242,238,245],['d',239,270,239,278],['u',255,269,250,269],
  ['u',229,255,222,255],['u',225,229,221,231],['d',225,255,223,260],['u',251,252,246,257],['d',253,288,251,290],
  ['u',265,287,261,287],['d',264,275,262,277],['d',276,287,274,290],['u',285,287,284,290],['d',285,290,283,290],
  ['u',269,289,264,289],['u',261,269,252,269],['d',260,268,260,268],['u',247,264,245,264],['d',247,269,235,271],
  ['d',269,275,266,277],['u',267,275,256,275],['u',261,268,261,268],['d',259,279,258,279],['u',265,275,258,280],
  ['d',264,272,259,272],['u',262,272,253,272],['d',263,272,263,274],['d',271,291,271,291],['d',292,297,287,297],
  ['d',296,302,288,302],['d',301,330,301,338],['d',329,334,322,347],['d',333,334,324,344],['u',311,331,309,335],
  ['u',311,312,298,314],['u',307,309,305,311]
];
const volumes = [3,6,4,2,3,3,2,6,3,2,2,3,3,3,2,2,16,6,5,10,4,3,3,4,3,5,4,3,3,4,4,4,3,9,5,9,5,6,3,8,8,6,8,3,4,6,6,3,8,6,3,8,3,4,6,5,5,3,5,6,8,11,11,7,9,8];
const times = ['23 5 2016','23 5 22:58','23 5 23:02','23 5 23:06','23 5 23:10','23 5 23:14','23 5 23:18','23 5 23:22','23 5 23:26','23 5 23:30','23 5 23:34','23 5 23:38','23 5 23:42','23 5 23:46','23 5 23:50','23 5 23:54','23 5 23:58'];
const prices = ['109.4200','109.4000','109.3800','109.3600','109.3400','109.3200','109.3000','','109.2600','109.2400'];
const columnX = i => Math.round(260 + i * 10.667) + 0.5;
const path = (cls, d) => `<path class="${cls}" d="${d}"/>`;
let out = '';
for (let i = 2; columnX(i) < 1154; i += 2) out += path('grid', `M${columnX(i)} 138V367`);
prices.forEach((label, i) => {
  const y = Math.round(156 + i * 21.45) - 0.5;
  if (!label) return;
  out += path('grid', `M257 ${y}H1154`) + path('frame', `M1154 ${y}h3`);
  out += `<text class="pricetext" x="1158" y="${y + 3}">${label}</text>`;
});
volumes.forEach((v, i) => { out += path('volume', `M${columnX(i)} ${367 - v}V367`); });
out += path('price', 'M257 306.500H1154');
out += path('cursor', 'M964.500 138V367');
candles.forEach(([dir, top, bottom, high, low], i) => {
  const kind = dir === 'u' ? 'up' : 'down';
  const x = columnX(i);
  out += path(kind + 'wick', `M${x} ${high}V${low}`);
  out += path(kind + 'body', `M${x - 3} ${top}h6V${bottom}h-6z`);
});
times.forEach((label, i) => {
  out += path('frame', `M${columnX(i * 4)} 367v2`);
  out += `<text x="${columnX(i * 4) - 0.5}" y="376">${label}</text>`;
});
out += path('baseline', 'M256 366.500H1154') + path('frame', 'M256.500 367V137.500H1154.500V367');
out += '<text class="heading" x="258" y="147">USDJPY、M1、セル: 2000、スケール: 100 %</text>';
out += '<rect class="nowbox" x="1157" y="302" width="30" height="9"/><text class="nowtext" x="1158" y="309">109.2790</text>';
document.getElementById('usdjpy').innerHTML = out;
```
